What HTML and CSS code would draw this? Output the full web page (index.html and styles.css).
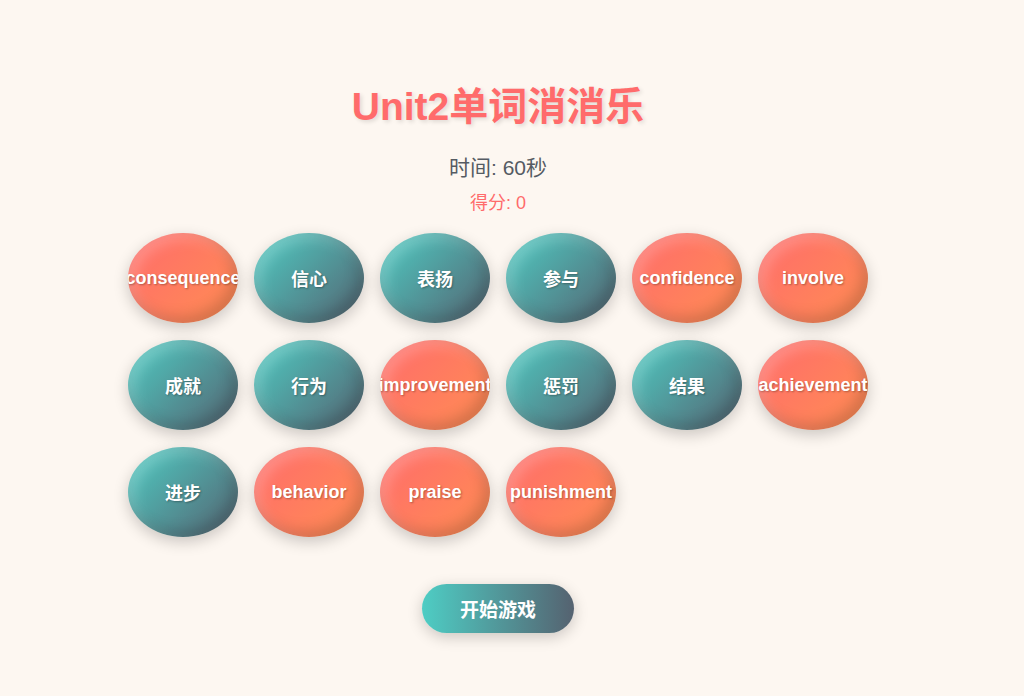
FILE: index.html
```html
<!DOCTYPE html>
<html lang="zh">
<head>
<meta charset="utf-8">
<title>Unit2单词消消乐</title>
<link rel="stylesheet" href="styles.css">
</head>
<body>
<div class="app">
  <h1 class="title">Unit2单词消消乐</h1>
  <div class="timer">时间: 60秒</div>
  <div class="score">得分: 0</div>
  <div class="board">
    <div class="bubble en"><span>consequence</span></div>
    <div class="bubble cn"><span>信心</span></div>
    <div class="bubble cn"><span>表扬</span></div>
    <div class="bubble cn"><span>参与</span></div>
    <div class="bubble en"><span>confidence</span></div>
    <div class="bubble en"><span>involve</span></div>
    <div class="bubble cn"><span>成就</span></div>
    <div class="bubble cn"><span>行为</span></div>
    <div class="bubble en"><span>improvement</span></div>
    <div class="bubble cn"><span>惩罚</span></div>
    <div class="bubble cn"><span>结果</span></div>
    <div class="bubble en"><span>achievement</span></div>
    <div class="bubble cn"><span>进步</span></div>
    <div class="bubble en"><span>behavior</span></div>
    <div class="bubble en"><span>praise</span></div>
    <div class="bubble en"><span>punishment</span></div>
  </div>
  <button class="start">开始游戏</button>
</div>
</body>
</html>
```
FILE: styles.css
```css
html, body {
  margin: 0;
  padding: 0;
  background: #fdf7f1;
  font-family: "Liberation Sans", Arial, "Noto Sans CJK SC", sans-serif;
}
.app {
  width: 996px;
  display: flex;
  flex-direction: column;
  align-items: center;
  padding-top: 85px;
  padding-bottom: 40px;
}
.title {
  margin: 0;
  font-size: 39px;
  line-height: 44px;
  font-weight: bold;
  color: #ff6b6b;
  text-shadow: 2px 2px 4px rgba(0, 0, 0, 0.12);
}
.timer {
  margin-top: 25px;
  font-size: 21px;
  line-height: 28px;
  color: #555b63;
}
.score {
  margin-top: 9px;
  font-size: 18px;
  line-height: 24px;
  color: #ff6b6b;
}
.board {
  margin-top: 18px;
  display: grid;
  grid-template-columns: repeat(6, 110px);
  column-gap: 16px;
  row-gap: 17px;
}
.bubble {
  width: 110px;
  height: 90px;
  border-radius: 50%;
  display: flex;
  align-items: center;
  justify-content: center;
  overflow: hidden;
  color: #fff;
  font-weight: bold;
  font-size: 18px;
  white-space: nowrap;
  text-shadow: 1px 1px 2px rgba(0, 0, 0, 0.3);
  box-shadow: inset -6px -6px 14px rgba(0, 0, 0, 0.17),
              inset 6px 6px 14px rgba(255, 255, 255, 0.22),
              0 5px 15px rgba(0, 0, 0, 0.2);
}
.bubble.en {
  background: linear-gradient(135deg, #ff6b6b, #ff8e53);
}
.bubble.cn {
  background: linear-gradient(135deg, #4ecdc4, #556270);
}
.start {
  margin-top: 47px;
  border: none;
  height: 49px;
  padding: 0 38px;
  border-radius: 25px;
  background: linear-gradient(90deg, #4ecdc4, #556270);
  color: #fff;
  font-family: "Liberation Sans", Arial, "Noto Sans CJK SC", sans-serif;
  font-size: 19px;
  font-weight: bold;
  box-shadow: 0 4px 15px rgba(0, 0, 0, 0.2);
  cursor: pointer;
}
```
